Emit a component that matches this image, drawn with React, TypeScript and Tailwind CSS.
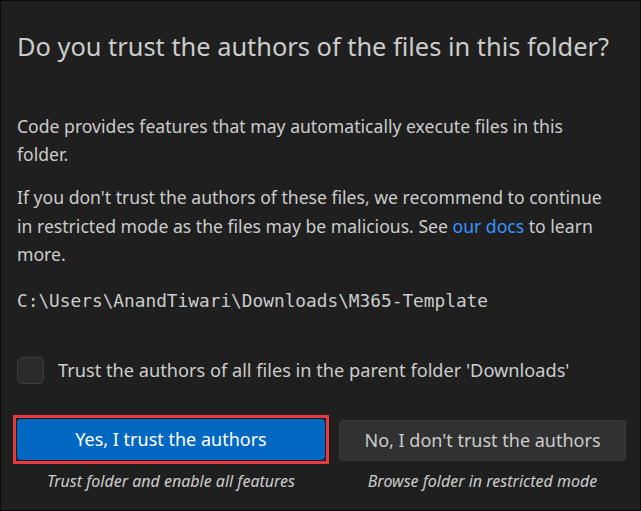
export default function App() {
  return (
    <div
      className="w-[641px] h-[511px] bg-[#1f1f1f] border border-[#0b0b0b] text-[#cccccc] flex flex-col pl-[16px] pr-[14px]"
      style={{ fontFamily: '"Noto Sans", "Open Sans", sans-serif' }}
    >
      {/* Title */}
      <h1 className="mt-[27px] text-[25.4px] leading-[36px] text-[#cccccc]">
        Do you trust the authors of the files in this folder?
      </h1>

      {/* Body */}
      <div className="mt-[47.5px] text-[17.6px] leading-[28.5px]">
        <p>
          Code provides features that may automatically execute files in this
          <br />
          folder.
        </p>
        <p className="mt-[14.75px]">
          If you don't trust the authors of these files, we recommend to continue
          <br />
          in restricted mode as the files may be malicious. See{" "}
          <span className="text-[#3794ff]">our docs</span> to learn
          <br />
          more.
        </p>
        <p
          className="mt-[18px] text-[17.8px]"
          style={{ fontFamily: '"DejaVu Sans Mono", "Liberation Mono", monospace' }}
        >
          C:\Users\AnandTiwari\Downloads\M365-Template
        </p>
      </div>

      {/* Checkbox */}
      <div className="mt-[41.5px] flex items-center gap-[14px]">
        <div className="w-[27px] h-[27px] shrink-0 rounded-[5px] bg-[#2b2b2b] border border-[#3c3c3c]" />
        <span className="text-[18.2px]">Trust the authors of all files in the parent folder 'Downloads'</span>
      </div>

      {/* Buttons */}
      <div className="mt-[30.5px] flex gap-[10px]">
        <div className="flex flex-col items-center w-[316px] -ml-[4px]">
          <div className="p-[1px] border-[3px] border-[#e8393e] w-full">
            <div className="h-[41px] rounded-[4px] bg-[#0068c0] text-white flex items-center justify-center text-[18px]">
              Yes, I trust the authors
            </div>
          </div>
          <span className="mt-[7px] leading-[20px] italic text-[16px] text-[#cccccc]">
            Trust folder and enable all features
          </span>
        </div>
        <div className="flex flex-col items-center flex-1 pt-[5px]">
          <div className="h-[41px] w-full rounded-[4px] bg-[#313131] border border-[#3a3a3a] flex items-center justify-center text-[18px]">
            No, I don't trust the authors
          </div>
          <span className="mt-[10px] leading-[20px] italic text-[16px] text-[#cccccc]">
            Browse folder in restricted mode
          </span>
        </div>
      </div>
    </div>
  );
}
